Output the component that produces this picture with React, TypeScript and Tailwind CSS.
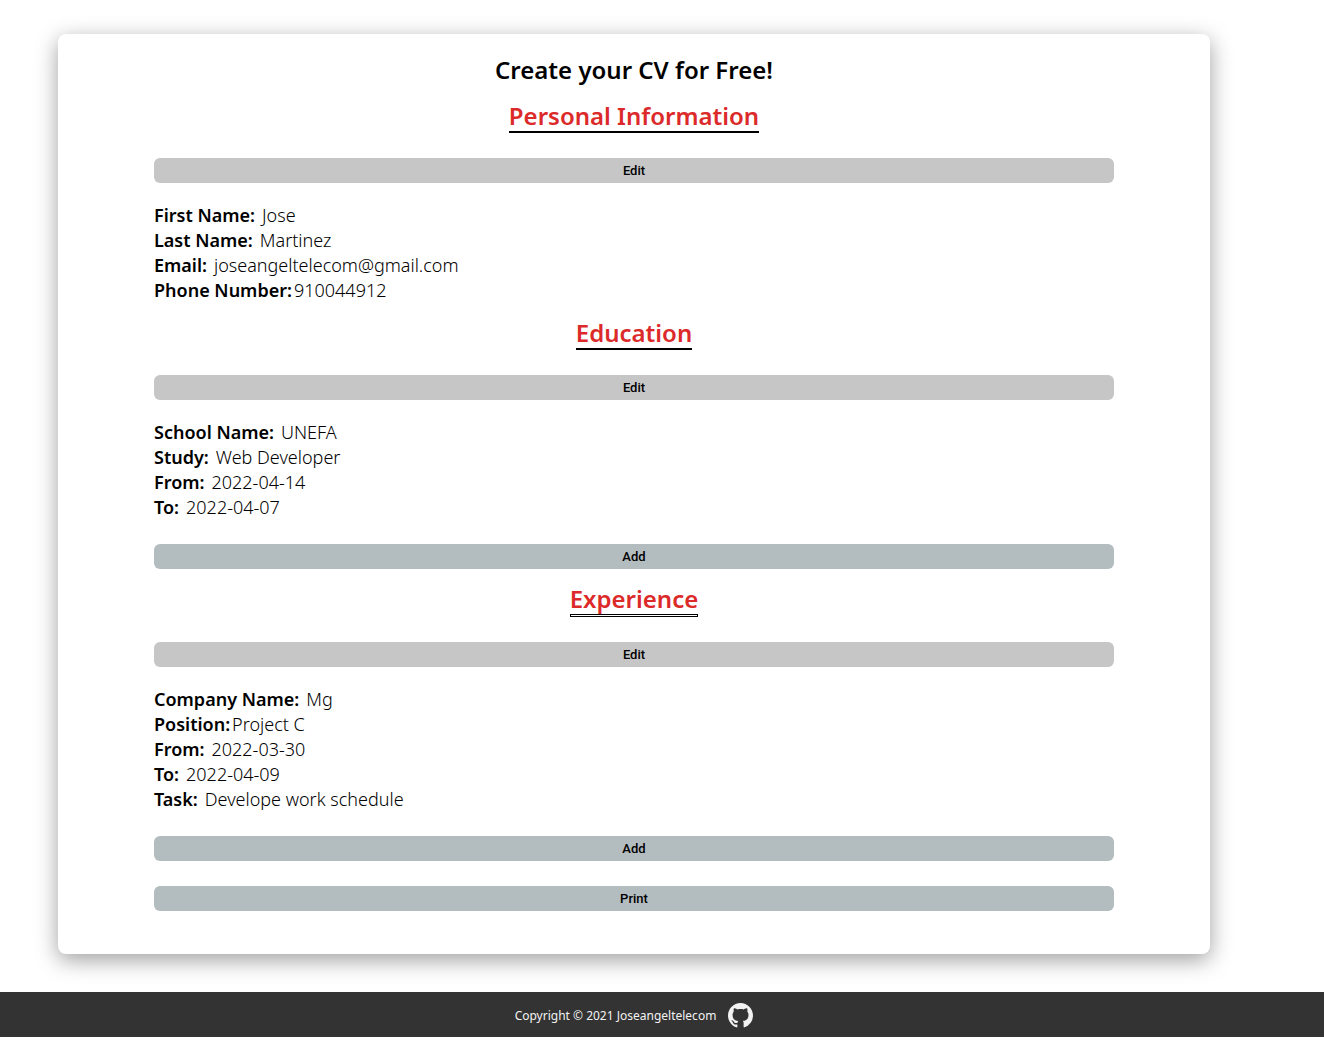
import React from "react";

type Field = { label: string; value: string; tight?: boolean };

const personal: Field[] = [
  { label: "First Name:", value: "Jose" },
  { label: "Last Name:", value: "Martinez" },
  { label: "Email:", value: "joseangeltelecom@gmail.com" },
  { label: "Phone Number:", value: "910044912", tight: true },
];

const education: Field[] = [
  { label: "School Name:", value: "UNEFA" },
  { label: "Study:", value: "Web Developer" },
  { label: "From:", value: "2022-04-14" },
  { label: "To:", value: "2022-04-07" },
];

const experience: Field[] = [
  { label: "Company Name:", value: "Mg" },
  { label: "Position:", value: "Project C", tight: true },
  { label: "From:", value: "2022-03-30" },
  { label: "To:", value: "2022-04-09" },
  { label: "Task:", value: "Develope work schedule" },
];

function BarButton({ children, tone }: { children: string; tone: "gray" | "blue" }) {
  return (
    <button
      type="button"
      className={`block h-[25px] w-full cursor-pointer rounded-md font-['Roboto',sans-serif] text-[13px] leading-5 font-medium text-black ${
        tone === "gray" ? "bg-[#c6c6c6]" : "bg-[#b3bcbf]"
      }`}
    >
      {children}
    </button>
  );
}

function Section({
  title,
  fields,
  framed,
  addable,
}: {
  title: string;
  fields: Field[];
  framed?: boolean;
  addable?: boolean;
}) {
  return (
    <section className="pt-[15px]">
      <h2 className="mx-auto mb-[25px] w-fit text-2xl leading-[30px] font-semibold text-[#dc2a2a]">
        {title}
        <span
          className={
            framed ? "block h-[3px] border border-black bg-white" : "block h-[2px] bg-black"
          }
        />
      </h2>
      <BarButton tone="gray">Edit</BarButton>
      <dl className="mt-5 text-lg leading-[25px] text-black">
        {fields.map((f) => (
          <div key={f.label} className={f.tight ? "flex gap-0.5" : "flex gap-[7px]"}>
            <dt className="font-semibold">{f.label}</dt>
            <dd className="font-light">{f.value}</dd>
          </div>
        ))}
      </dl>
      {addable && (
        <div className="mt-6">
          <BarButton tone="blue">Add</BarButton>
        </div>
      )}
    </section>
  );
}

function GithubMark() {
  return (
    <svg viewBox="0 0 16 16" className="size-[25px]" fill="#f2f2f2" aria-hidden="true">
      <path d="M8 0C3.58 0 0 3.58 0 8c0 3.54 2.29 6.53 5.47 7.59.4.07.55-.17.55-.38 0-.19-.01-.82-.01-1.49-2.01.37-2.53-.49-2.69-.94-.09-.23-.48-.94-.82-1.13-.28-.15-.68-.52-.01-.53.63-.01 1.08.58 1.23.82.72 1.21 1.87.87 2.33.66.07-.52.28-.87.51-1.07-1.78-.2-3.64-.89-3.64-3.95 0-.87.31-1.59.82-2.15-.08-.2-.36-1.02.08-2.12 0 0 .67-.21 2.2.82.64-.18 1.32-.27 2-.27s1.36.09 2 .27c1.53-1.04 2.2-.82 2.2-.82.44 1.1.16 1.92.08 2.12.51.56.82 1.27.82 2.15 0 3.07-1.87 3.75-3.65 3.95.29.25.54.73.54 1.48 0 1.07-.01 1.93-.01 2.2 0 .21.15.46.55.38A8.01 8.01 0 0 0 16 8c0-4.42-3.58-8-8-8Z" />
    </svg>
  );
}

export default function App() {
  return (
    <div className="bg-white font-['Noto_Sans',sans-serif]">
      <main className="pt-[34px] pr-14 pb-[38px]">
        <div className="mx-auto max-w-6xl rounded-lg bg-white px-24 pt-5 pb-[43px] shadow-[0_6px_22px_rgba(0,0,0,0.38)]">
          <h1 className="text-center text-2xl leading-8 font-semibold text-black">
            Create your CV for Free!
          </h1>
          <Section title="Personal Information" fields={personal} />
          <Section title="Education" fields={education} addable />
          <Section title="Experience" fields={experience} framed addable />
          <div className="mt-[25px]">
            <BarButton tone="blue">Print</BarButton>
          </div>
        </div>
      </main>
      <footer className="flex h-[45px] items-center justify-center gap-3 bg-[#333333] pt-0.5 pr-14 text-xs text-[#f2f2f2]">
        <p>Copyright © 2021 Joseangeltelecom</p>
        <a href="#github" aria-label="GitHub">
          <GithubMark />
        </a>
      </footer>
    </div>
  );
}
